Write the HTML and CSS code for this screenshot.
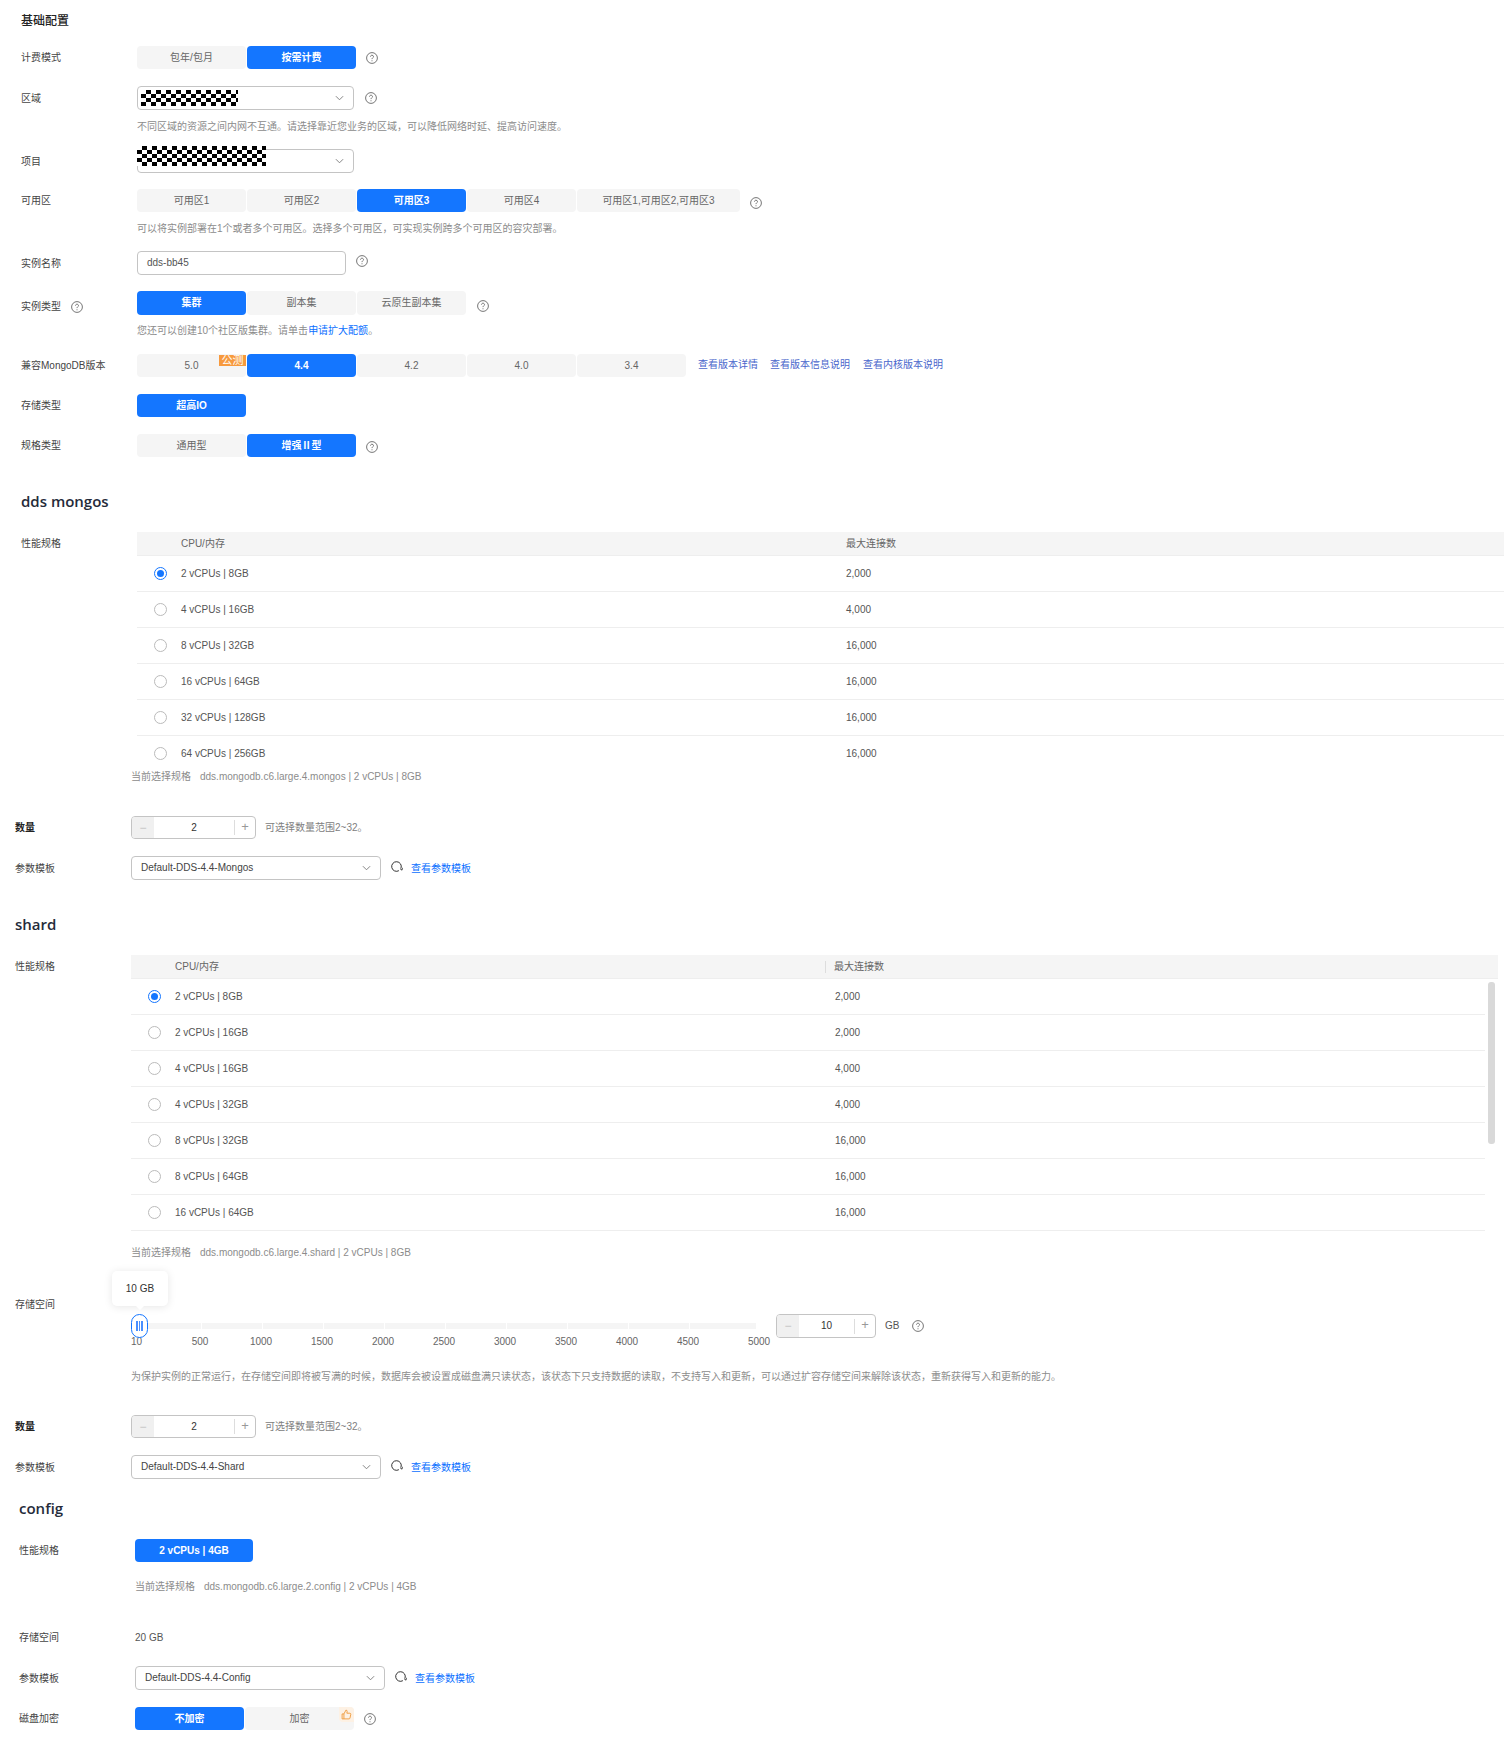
FILE: index.html
```html
<!DOCTYPE html>
<html lang="zh">
<head>
<meta charset="utf-8">
<title>基础配置</title>
<link rel="stylesheet" href="styles.css">
</head>
<body>
<svg class="sprite" xmlns="http://www.w3.org/2000/svg">
  <symbol id="i-help" viewBox="0 0 12 12"><circle cx="6" cy="6" r="5.4" fill="none" stroke="#666" stroke-width=".9"/><path d="M4.5 4.7c0-.9.7-1.5 1.5-1.5s1.5.6 1.5 1.4c0 1.2-1.5 1.2-1.5 2.5" fill="none" stroke="#666" stroke-width=".9"/><circle cx="6" cy="8.7" r=".55" fill="#666"/></symbol>
  <symbol id="i-chev" viewBox="0 0 10 6"><path d="M1 1l4 4 4-4" fill="none" stroke="#777" stroke-width="1"/></symbol>
  <symbol id="i-refresh" viewBox="0 0 12 12"><path d="M10 7.14A4.8 4.8 0 1 0 7.9 9.66" fill="none" stroke="#333" stroke-width="1"/><path d="M9 7.6l2 1.6.4-2.4" fill="none" stroke="#333" stroke-width=".9"/></symbol>
  <symbol id="i-thumb" viewBox="0 0 12 12"><path d="M1.2 5.4h2v5.4h-2zM3.2 5.4L5.4 1.2c.9 0 1.4.6 1.3 1.4L6.4 4.6h3.3c.7 0 1.1.6 1 1.2l-.9 4.1c-.1.5-.5.9-1 .9H3.2" fill="none" stroke="#ef9a3c" stroke-width="1"/></symbol>
</svg>

<section class="sec-a">
  <h2 class="title">基础配置</h2>
  <div class="row mt-16">
    <div class="label">计费模式</div>
    <div class="seg"><span class="opt">包年/包月</span><span class="opt on">按需计费</span></div>
    <svg class="help ml-10"><use href="#i-help"/></svg>
  </div>
  <div class="row tall mt-17">
    <div class="label">区域</div>
    <div class="select s-region"><span class="mask m-region"></span><svg class="chev"><use href="#i-chev"/></svg></div>
    <svg class="help ml-11"><use href="#i-help"/></svg>
  </div>
  <p class="hint">不同区域的资源之间内网不互通。请选择靠近您业务的区域，可以降低网络时延、提高访问速度。</p>
  <div class="row tall mt-15">
    <div class="label">项目</div>
    <div class="select s-region"><span class="mask m-project"></span><svg class="chev"><use href="#i-chev"/></svg></div>
  </div>
  <div class="row mt-16">
    <div class="label">可用区</div>
    <div class="seg"><span class="opt">可用区1</span><span class="opt">可用区2</span><span class="opt on">可用区3</span><span class="opt">可用区4</span><span class="opt wide">可用区1,可用区2,可用区3</span></div>
    <svg class="help ml-10 down"><use href="#i-help"/></svg>
  </div>
  <p class="hint">可以将实例部署在1个或者多个可用区。选择多个可用区，可实现实例跨多个可用区的容灾部署。</p>
  <div class="row tall mt-15">
    <div class="label">实例名称</div>
    <div class="input">dds-bb45</div>
    <svg class="help ml-10 up"><use href="#i-help"/></svg>
  </div>
  <div class="row tall mt-16">
    <div class="label lab-low">实例类型<svg class="help ml-10"><use href="#i-help"/></svg></div>
    <div class="seg"><span class="opt on">集群</span><span class="opt">副本集</span><span class="opt">云原生副本集</span></div>
    <svg class="help ml-11 down-s"><use href="#i-help"/></svg>
  </div>
  <p class="hint tight">您还可以创建10个社区版集群。请单击<a class="link">申请扩大配额</a>。</p>
  <div class="row mt-16">
    <div class="label">兼容MongoDB版本</div>
    <div class="seg">
      <span class="opt has-badge">5.0<b class="badge">公测</b></span><span class="opt on">4.4</span><span class="opt">4.2</span><span class="opt">4.0</span><span class="opt">3.4</span>
    </div>
    <div class="links"><a class="link alt">查看版本详情</a><a class="link alt">查看版本信息说明</a><a class="link alt">查看内核版本说明</a></div>
  </div>
  <div class="row mt-17">
    <div class="label">存储类型</div>
    <div class="seg"><span class="opt on">超高IO</span></div>
  </div>
  <div class="row mt-17">
    <div class="label">规格类型</div>
    <div class="seg"><span class="opt">通用型</span><span class="opt on">增强Ⅱ型</span></div>
    <svg class="help ml-10 down-xs"><use href="#i-help"/></svg>
  </div>
  <h2 class="heading mt-35">dds mongos</h2>
  <div class="row top mt-20">
    <div class="label lab-head">性能规格</div>
    <div class="table t-mongos">
      <div class="thead"><span class="c-cpu">CPU/内存</span><span class="c-conn">最大连接数</span></div>
      <div class="tr"><i class="radio on"></i><span class="c-text">2 vCPUs | 8GB</span><span class="c-val">2,000</span></div>
      <div class="tr"><i class="radio"></i><span class="c-text">4 vCPUs | 16GB</span><span class="c-val">4,000</span></div>
      <div class="tr"><i class="radio"></i><span class="c-text">8 vCPUs | 32GB</span><span class="c-val">16,000</span></div>
      <div class="tr"><i class="radio"></i><span class="c-text">16 vCPUs | 64GB</span><span class="c-val">16,000</span></div>
      <div class="tr"><i class="radio"></i><span class="c-text">32 vCPUs | 128GB</span><span class="c-val">16,000</span></div>
      <div class="tr last"><i class="radio"></i><span class="c-text">64 vCPUs | 256GB</span><span class="c-val">16,000</span></div>
    </div>
  </div>
</section>

<section class="sec-b">
  <p class="spec tight"><span>当前选择规格</span><span>dds.mongodb.c6.large.4.mongos | 2 vCPUs | 8GB</span></p>
  <div class="row mt-32">
    <div class="label strong">数量</div>
    <div class="stepper"><span class="minus">−</span><span class="num">2</span><span class="plus">+</span></div>
    <span class="note">可选择数量范围2~32。</span>
  </div>
  <div class="row tall mt-17">
    <div class="label">参数模板</div>
    <div class="select s-param">Default-DDS-4.4-Mongos<svg class="chev"><use href="#i-chev"/></svg></div>
    <svg class="refresh"><use href="#i-refresh"/></svg><a class="link lnk-param">查看参数模板</a>
  </div>
  <h2 class="heading mt-35">shard</h2>
  <div class="row top mt-20">
    <div class="label lab-head">性能规格</div>
    <div class="table t-shard">
      <div class="thead"><span class="c-cpu">CPU/内存</span><span class="c-conn">最大连接数</span></div>
      <div class="tr"><i class="radio on"></i><span class="c-text">2 vCPUs | 8GB</span><span class="c-val">2,000</span></div>
      <div class="tr"><i class="radio"></i><span class="c-text">2 vCPUs | 16GB</span><span class="c-val">2,000</span></div>
      <div class="tr"><i class="radio"></i><span class="c-text">4 vCPUs | 16GB</span><span class="c-val">4,000</span></div>
      <div class="tr"><i class="radio"></i><span class="c-text">4 vCPUs | 32GB</span><span class="c-val">4,000</span></div>
      <div class="tr"><i class="radio"></i><span class="c-text">8 vCPUs | 32GB</span><span class="c-val">16,000</span></div>
      <div class="tr"><i class="radio"></i><span class="c-text">8 vCPUs | 64GB</span><span class="c-val">16,000</span></div>
      <div class="tr"><i class="radio"></i><span class="c-text">16 vCPUs | 64GB</span><span class="c-val">16,000</span></div>
      <div class="scrollbar"></div>
    </div>
  </div>
  <p class="spec mt-15"><span>当前选择规格</span><span>dds.mongodb.c6.large.4.shard | 2 vCPUs | 8GB</span></p>
  <div class="row top mt-38">
    <div class="label lab-line">存储空间</div>
    <div class="storage">
      <div class="slider">
        <div class="slide-line">
          <div class="handle"><i></i><i></i><i></i><div class="tip">10 GB</div></div>
          <div class="track"><i></i><i></i><i></i><i></i><i></i><i></i><i></i><i></i><i></i><i></i></div>
        </div>
        <div class="ticks"><span>10</span><span>500</span><span>1000</span><span>1500</span><span>2000</span><span>2500</span><span>3000</span><span>3500</span><span>4000</span><span>4500</span><span>5000</span></div>
      </div>
      <div class="stepper small"><span class="minus">−</span><span class="num">10</span><span class="plus">+</span></div>
      <span class="unit">GB</span>
      <svg class="help unit-help"><use href="#i-help"/></svg>
    </div>
  </div>
  <p class="hint mt-21">为保护实例的正常运行，在存储空间即将被写满的时候，数据库会被设置成磁盘满只读状态，该状态下只支持数据的读取，不支持写入和更新，可以通过扩容存储空间来解除该状态，重新获得写入和更新的能力。</p>
  <div class="row mt-31">
    <div class="label strong">数量</div>
    <div class="stepper"><span class="minus">−</span><span class="num">2</span><span class="plus">+</span></div>
    <span class="note">可选择数量范围2~32。</span>
  </div>
  <div class="row tall mt-17">
    <div class="label">参数模板</div>
    <div class="select s-param">Default-DDS-4.4-Shard<svg class="chev"><use href="#i-chev"/></svg></div>
    <svg class="refresh"><use href="#i-refresh"/></svg><a class="link lnk-param">查看参数模板</a>
  </div>
</section>

<section class="sec-c">
  <h2 class="heading mt-20">config</h2>
  <div class="row mt-20">
    <div class="label">性能规格</div>
    <div class="seg"><span class="opt on config-btn">2 vCPUs | 4GB</span></div>
  </div>
  <p class="spec mt-18"><span>当前选择规格</span><span>dds.mongodb.c6.large.2.config | 2 vCPUs | 4GB</span></p>
  <div class="row line mt-37">
    <div class="label">存储空间</div>
    <span class="value">20 GB</span>
  </div>
  <div class="row tall mt-21">
    <div class="label">参数模板</div>
    <div class="select s-param">Default-DDS-4.4-Config<svg class="chev"><use href="#i-chev"/></svg></div>
    <svg class="refresh"><use href="#i-refresh"/></svg><a class="link lnk-param">查看参数模板</a>
  </div>
  <div class="row mt-17">
    <div class="label">磁盘加密</div>
    <div class="seg"><span class="opt on">不加密</span><span class="opt has-badge">加密<span class="thumb"><svg><use href="#i-thumb"/></svg></span></span></div>
    <svg class="help ml-10"><use href="#i-help"/></svg>
  </div>
</section>
</body>
</html>
```
FILE: styles.css
```css
* { box-sizing: border-box; }
html, body { margin: 0; padding: 0; background: #fff; }
body {
  width: 1507px;
  height: 1745px;
  overflow: hidden;
  font-family: "Liberation Sans", "Noto Sans CJK SC", sans-serif;
  font-size: 10px;
  line-height: 14px;
  color: #333;
}
.sprite { display: none; }
p, h2 { margin: 0; }
i { font-style: normal; }

.sec-a { padding: 12px 0 0 21px; }
.sec-b { padding-left: 15px; }
.sec-c { padding-left: 19px; }

.mt-15 { margin-top: 15px; }
.mt-16 { margin-top: 16px; }
.mt-17 { margin-top: 17px; }
.mt-18 { margin-top: 18px; }
.mt-20 { margin-top: 20px; }
.mt-21 { margin-top: 21px; }
.mt-31 { margin-top: 31px; }
.mt-32 { margin-top: 32px; }
.mt-35 { margin-top: 35px; }
.mt-37 { margin-top: 37px; }
.mt-38 { margin-top: 38px; }
.ml-10 { margin-left: 10px; }
.ml-11 { margin-left: 11px; }
.ml-12 { margin-left: 12px; }

.title { font-size: 12px; line-height: 18px; font-weight: 500; color: #222; }
.heading { font-family: "Open Sans", "Liberation Sans", sans-serif; font-size: 15px; line-height: 18px; padding-bottom: 2px; font-weight: 600; color: #252b3a; }

.row { display: flex; align-items: center; height: 23px; }
.row.tall { height: 24px; }
.row.line { height: 14px; }
.row.top { align-items: flex-start; height: auto; }
.label { width: 116px; flex: none; display: flex; align-items: center; color: #444; white-space: nowrap; }
.row.tall .label { padding-top: 1px; }
.row.tall .label.lab-low { padding-top: 7px; }
.label.strong { color: #222; font-weight: 700; }
.lab-head { height: 23px; }
.lab-line { height: 14px; }

.seg { display: flex; gap: 1px; }
.opt {
  position: relative;
  width: 109px;
  height: 23px;
  background: #f5f5f5;
  border-radius: 4px;
  display: flex;
  align-items: center;
  justify-content: center;
  color: #666;
}
.opt.on { background: #1476ff; color: #fff; font-weight: 700; }
.opt.wide { width: 163px; }
.config-btn { width: 118px; }
.row.tall .opt { height: 24px; }

.badge {
  position: absolute;
  top: 1px;
  right: 0;
  width: 27px;
  height: 11px;
  overflow: hidden;
  background: #f79a3e;
  color: #fff;
  font-weight: 400;
  font-size: 11px;
  line-height: 11px;
  text-align: center;
}
.thumb {
  position: absolute;
  top: 0;
  right: 0;
  width: 15px;
  height: 15px;
  background: #fdf1e4;
  border-radius: 0 4px 0 4px;
  display: flex;
  align-items: center;
  justify-content: center;
}
.thumb svg { width: 11px; height: 11px; }

.help { width: 12px; height: 12px; flex: none; }
.help.up { margin-bottom: 4px; }
.help.down { margin-top: 5px; }
.help.down-s { margin-top: 5px; }
.help.down-xs { margin-top: 2px; }

.select {
  position: relative;
  height: 24px;
  border: 1px solid #c4c4c4;
  border-radius: 4px;
  background: #fff;
  display: flex;
  align-items: center;
  padding-left: 9px;
  color: #444;
}
.s-region { width: 217px; }
.s-param { width: 250px; }
.chev { position: absolute; right: 9px; top: 8px; width: 9px; height: 6px; }
.mask {
  position: absolute;
  background-color: #fff;
  background-image: conic-gradient(#000 25%, #fff 0 50%, #000 0 75%, #fff 0);
  background-size: 10px 8px;
}
.m-region { left: 3px; top: 3px; width: 97px; height: 16px; }
.m-project { left: -1px; top: -4px; width: 129px; height: 20px; }

.input {
  width: 209px;
  height: 24px;
  border: 1px solid #c4c4c4;
  border-radius: 4px;
  padding-left: 9px;
  display: flex;
  align-items: center;
  color: #555;
}
.hint { margin-left: 116px; margin-top: 10px; color: #8c8c8c; white-space: nowrap; }
.hint.tight { margin-top: 9px; }
.hint.mt-21 { margin-top: 21px; }
.link { color: #0a6fff; }
.link.alt { color: #4a66cc; }
.links { display: flex; gap: 12px; margin-left: 12px; margin-bottom: 2px; }
.links .link:last-child { margin-left: 1px; }
.refresh { width: 12px; height: 12px; margin-left: 10px; margin-bottom: 2px; flex: none; }
.lnk-param { margin-left: 8px; margin-top: 2px; }

.table { position: relative; }
.t-mongos { width: 1367px; }
.t-shard { width: 1367px; }
.thead {
  display: flex;
  align-items: center;
  height: 24px;
  background: #f5f5f5;
  border-bottom: 1px solid #eee;
  color: #666;
}
.c-cpu { width: 709px; padding-left: 44px; }
.t-shard .c-cpu { width: 703px; position: relative; }
.t-shard .c-cpu::after { content: ""; position: absolute; right: 8px; top: 1px; width: 1px; height: 12px; background: #ddd; }
.tr {
  display: flex;
  align-items: center;
  height: 36px;
  border-bottom: 1px solid #eee;
  color: #555;
}
.tr.last { border-bottom: 0; height: 35px; }
.t-shard .tr { width: 1354px; }
.radio {
  width: 13px;
  height: 13px;
  flex: none;
  margin-left: 17px;
  border: 1px solid #bbb;
  border-radius: 50%;
  background: #fff;
  display: flex;
  align-items: center;
  justify-content: center;
}
.radio.on { border-color: #1476ff; }
.radio.on::after { content: ""; width: 7px; height: 7px; border-radius: 50%; background: #1476ff; }
.c-text { width: 665px; margin-left: 14px; }
.t-shard .radio { margin-left: 17px; }
.t-shard .c-text { width: 660px; margin-left: 14px; }
.scrollbar {
  position: absolute;
  left: 1357px;
  top: 27px;
  width: 7px;
  height: 162px;
  border-radius: 3px;
  background: #d9d9d9;
}

.spec { margin-left: 116px; display: flex; gap: 9px; color: #8c8c8c; white-space: nowrap; }
.spec.tight { margin-top: -1px; }
.note { margin-left: 9px; color: #808080; }
.value { color: #555; }

.stepper {
  width: 125px;
  height: 23px;
  flex: none;
  display: flex;
  align-items: center;
  border: 1px solid #c4c4c4;
  border-radius: 4px;
  overflow: hidden;
}
.stepper .minus {
  width: 22px;
  height: 100%;
  background: #f0f0f0;
  color: #c4c4c4;
  display: flex;
  align-items: center;
  justify-content: center;
  font-size: 12px;
}
.stepper .num { flex: 1; text-align: center; color: #333; }
.stepper .plus {
  width: 21px;
  height: 15px;
  border-left: 1px solid #ddd;
  color: #999;
  display: flex;
  align-items: center;
  justify-content: center;
  font-size: 13px;
  line-height: 12px;
  padding-bottom: 2px;
}
.stepper.small { width: 100px; height: 24px; margin-top: 16px; }

.storage { display: flex; align-items: flex-start; }
.slider { width: 645px; padding-top: 16px; }
.slide-line { display: flex; align-items: center; }
.handle {
  position: relative;
  width: 17px;
  height: 24px;
  flex: none;
  background: #fff;
  border: 1px solid #1476ff;
  border-radius: 9px;
  display: flex;
  align-items: center;
  justify-content: center;
  gap: 1.2px;
  z-index: 1;
}
.handle > i { width: 1.5px; height: 10px; background: #4a90ff; }
.tip {
  position: absolute;
  left: -20px;
  bottom: 31px;
  width: 56px;
  height: 35px;
  background: #fff;
  border-radius: 5px;
  box-shadow: 0 1px 8px rgba(0, 0, 0, .1);
  display: flex;
  align-items: center;
  justify-content: center;
  color: #333;
}
.tip::after {
  content: "";
  position: absolute;
  left: 24px;
  bottom: -4px;
  border-left: 4px solid transparent;
  border-right: 4px solid transparent;
  border-top: 4px solid #fff;
}
.track { display: flex; gap: 1px; height: 6px; flex: none; }
.track i { width: 60px; background: #f5f5f5; }
.track i:first-child { width: 53px; }
.track i:last-child { width: 66px; }
.ticks { display: flex; margin-top: -3px; color: #666; }
.ticks span { width: 61px; flex: none; text-align: center; }
.ticks span:first-child { width: 38.5px; text-align: left; }
.ticks span:last-child { width: 81px; }
.unit { margin: 21px 0 0 9px; color: #555; }
.unit-help { margin: 22px 0 0 13px; }
```
